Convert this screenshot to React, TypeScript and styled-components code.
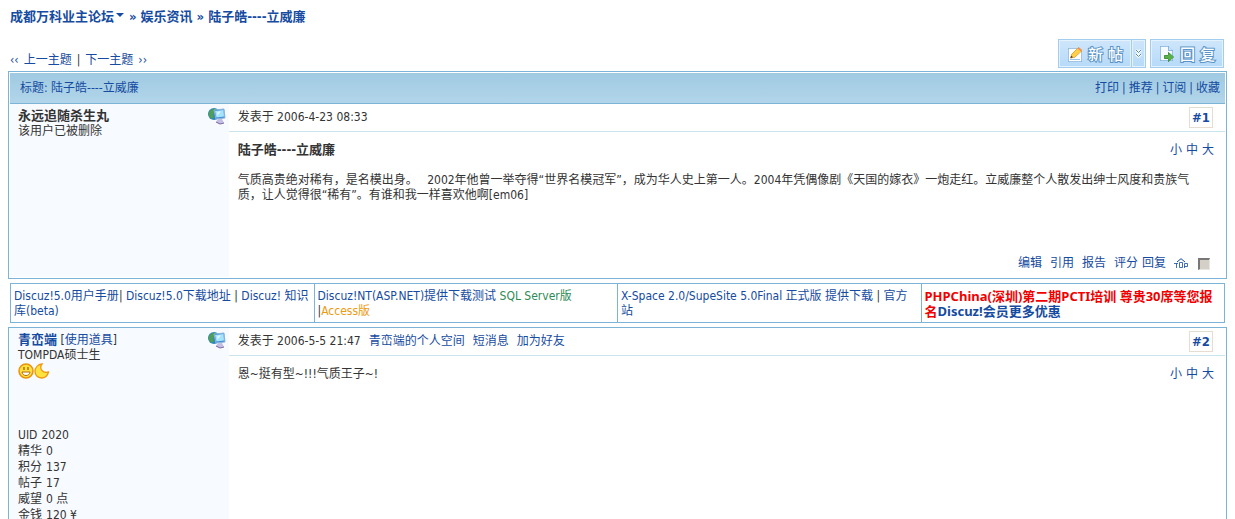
import React from "react";
import styled, { createGlobalStyle, css } from "styled-components";

const navy = "#154ba0";
const line = "#7cb4d8";

const Global = createGlobalStyle`
  * { box-sizing: border-box; }
  body {
    margin: 0;
    padding: 8px;
    background: #fff;
    color: #333;
    font: 12px/15px "DejaVu Sans Condensed", "Noto Sans CJK SC", sans-serif;
  }
  a { color: ${navy}; text-decoration: none; }
  a:hover { text-decoration: underline; }
  p, h1, h2, ul, dl, dd { margin: 0; padding: 0; }
`;

const Crumbs = styled.nav`
  display: flex;
  align-items: center;
  gap: 4px;
  padding: 1px 2px;
  font-size: 13px;
  line-height: 16px;
  font-weight: bold;
  color: ${navy};
`;

const Caret = styled.span`
  display: inline-block;
  margin: 0 1px 4px 2px;
  border: 4px solid transparent;
  border-top-color: ${navy};
  border-bottom-width: 0;
`;

const Toolbar = styled.div`
  display: flex;
  justify-content: space-between;
  align-items: flex-end;
  margin-top: 13px;
  padding: 0 3px 3px 2px;
`;

const Pager = styled.div`
  display: flex;
  gap: 5px;
  a {
    display: flex;
    gap: 5px;
  }
`;

const Actions = styled.div`
  display: flex;
  gap: 4px;
`;

const ButtonGroup = styled.div`
  display: flex;
`;

const ToolButton = styled.button<{ $narrow?: boolean }>`
  display: flex;
  align-items: center;
  justify-content: center;
  gap: 5px;
  width: ${(p) => (p.$narrow ? 14 : 74)}px;
  height: 29px;
  padding: 0;
  border: 1px solid #a3cdee;
  border-left-width: ${(p) => (p.$narrow ? 0 : 1)}px;
  box-shadow: inset 0 0 0 1px #e3f2fe;
  background: linear-gradient(#cfe6fb, #b5daf8);
  color: #fff;
  font: 500 15px/20px "Noto Sans CJK SC", sans-serif;
  -webkit-text-stroke: 2px #5a93c8;
  paint-order: stroke fill;
  cursor: pointer;
`;

const Panel = styled.section<{ $flush?: boolean }>`
  padding: ${(p) => (p.$flush ? 0 : 1)}px 1px 1px;
  border: 1px solid ${line};
`;

const PanelHead = styled.header`
  display: flex;
  justify-content: space-between;
  align-items: center;
  height: 31px;
  padding: 0 5px 0 10px;
  border-bottom: 1px solid ${line};
  background: linear-gradient(#9fcae2, #b2d5ea);
  color: ${navy};
`;

const Title = styled.h1`
  font-size: 12px;
  font-weight: normal;
`;

const HeadLinks = styled.div`
  display: flex;
  gap: 3px;
`;

const Post = styled.article<{ $tall?: boolean }>`
  display: grid;
  grid-template-columns: 18% 1fr;
  min-height: ${(p) => (p.$tall ? 280 : 173)}px;
`;

const Author = styled.aside`
  padding: 4px 3px 0 8px;
  background: #f7faff;
`;

const AuthorHead = styled.div`
  display: flex;
  justify-content: space-between;
  align-items: flex-start;
  height: 16px;
`;

const Name = styled.strong`
  font-size: 13px;
`;

const Moods = styled.div`
  display: flex;
  height: 64px;
`;

const Stats = styled.dl`
  line-height: 16px;
  div { display: flex; gap: 4px; }
`;

const Content = styled.div`
  display: flex;
  flex-direction: column;
`;

const PostBar = styled.div`
  display: flex;
  align-items: center;
  height: 28px;
  padding: 0 12px 0 9px;
  border-bottom: 1px solid #cbe5f0;
  gap: 8px;
`;

const Floor = styled.a`
  margin-left: auto;
  padding: 2px;
  border: 1px solid #e6ddd0;
  font-size: 13px;
  font-weight: bold;
`;

const Body = styled.div`
  flex: 1;
  padding: 10px 11px 0 9px;
`;

const BodyTop = styled.div`
  display: flex;
  justify-content: space-between;
  line-height: 16px;
`;

const Subject = styled.h2`
  font-size: 13px;
  line-height: 16px;
`;

const Sizes = styled.div`
  display: flex;
  gap: 4px;
`;

const Text = styled.p<{ $spaced?: boolean }>`
  ${(p) => p.$spaced && css`
    margin-top: 15px;
    padding-right: 20px;
  `}
`;

const PostFoot = styled.footer`
  display: flex;
  justify-content: flex-end;
  align-items: center;
  gap: 8px;
  padding: 0 15px 6px 0;
`;

const FootPair = styled.span`
  display: flex;
  gap: 4px;
`;

const TopLink = styled.a`
  display: flex;
`;

const Tick = styled.input`
  appearance: none;
  width: 12px;
  height: 12px;
  margin: 0 0 0 2px;
  border: 2px solid #777;
  border-right: 1px solid #e8e6e0;
  border-bottom: 1px solid #e8e6e0;
  background: #d4d0c8;
`;

const Ads = styled.table`
  width: calc(100% - 4px);
  margin: 4px 2px;
  border-collapse: collapse;
  table-layout: fixed;
  td {
    height: 39px;
    padding: 5px 4px 2px 3px;
    border: 1px solid ${line};
    vertical-align: top;
  }
`;

const Tint = styled.a<{ $c: string }>`
  color: ${(p) => p.$c};
`;

const Loud = styled.strong`
  display: block;
  font-family: "Noto Sans", "Noto Sans CJK SC", sans-serif;
  font-size: 13px;
  line-height: 15px;
`;

const Messenger = () => (
  <svg width="18" height="17" viewBox="0 0 18 17" aria-hidden="true">
    <circle cx="6" cy="6" r="6" fill="#2d86c0" />
    <path d="M1 4C3 1 6 0 8 1L7 4 5 6 6 9 4 11C1 9 0 7 1 4Z" fill="#4f9f56" />
    <path d="M6 2 16 1 17 10 8 11Z" fill="#3f8fd4" stroke="#8fb4dc" />
    <path d="M7 3 15.500 2 16 8.500 8.500 9.500Z" fill="#a6e2fb" />
    <path d="M9 4 13 3 9.500 8Z" fill="#d8f6ff" />
    <path d="M10 11H14L16 15 11 16 8 14Z" fill="#c4bfe2" />
    <path d="M8 14 12 16 16 15" fill="none" stroke="#7a68a8" />
  </svg>
);

const Smile = () => (
  <svg width="16" height="16" viewBox="0 0 16 16" aria-hidden="true">
    <circle cx="8" cy="8" r="7" fill="#ffe03c" stroke="#e8930c" strokeWidth="1.500" />
    <path d="M4 9H12C11.500 11.500 10 12.500 8 12.500S4.500 11.500 4 9Z" fill="#fff" stroke="#b06a14" />
    <path d="M6 4V7M10 4V7" stroke="#a05a10" strokeWidth="1.200" />
  </svg>
);

const Moon = () => (
  <svg width="16" height="16" viewBox="0 0 16 16" aria-hidden="true">
    <path d="M8 1C5 5 8 10.500 14.500 9C13.500 13 10.500 15 7.500 15C3.500 15 1 12 1 8.500C1 4.500 4 1.500 8 1Z" fill="#ffe23e" stroke="#ee9a10" strokeWidth="1.300" />
  </svg>
);

const Compose = () => (
  <svg width="16" height="16" viewBox="0 0 16 16" aria-hidden="true">
    <path d="M1.500 2.500H11L14.500 5V15.500H1.500Z" fill="#fff" stroke="#4488c8" />
    <path d="M3 13.500H13" stroke="#9ac4e8" />
    <path d="M3.500 12 5 8 11.500 1.500 15 4.500 8 11Z" fill="#ffcf4a" stroke="#c98328" />
    <path d="M10.500 2.500 11.500 1.500 15 4.500 14 5.500Z" fill="#f28a5c" />
    <path d="M3.500 12 4.300 9.800 6 11.300Z" fill="#333" />
  </svg>
);

const ReplyIcon = () => (
  <svg width="16" height="16" viewBox="0 0 16 16" aria-hidden="true">
    <path d="M1.500 .5H9.500L13.500 4.500V14.500H1.500Z" fill="#f4faff" stroke="#4488c8" />
    <path d="M9.500 .5V4.500H13.500" fill="#cfe6fa" stroke="#4488c8" />
    <path d="M5.500 9.500H9.500V6.500L14.500 11 9.500 15.500V12.500H5.500Z" fill="#58b04a" stroke="#2f7d2c" />
  </svg>
);

const Chevrons = () => (
  <svg width="7" height="9" viewBox="0 0 7 9" aria-hidden="true">
    <path d="M1 1 3.500 3.500 6 1M1 5 3.500 7.500 6 5" fill="none" stroke="#fff" strokeWidth="2.600" />
    <path d="M1 1 3.500 3.500 6 1M1 5 3.500 7.500 6 5" fill="none" stroke="#4d88c0" />
  </svg>
);

const TopIcon = () => (
  <svg width="14" height="11" viewBox="0 0 14 11" role="img" aria-label="TOP">
    <path d="M3 4 7 .7 11 4" fill="none" stroke={navy} />
    <path d="M0 5.500H4M2.500 5.500V10M5.500 4.500H8.500V9.500H5.500ZM10.500 10V5.500H13.500V8.500H10.500" fill="none" stroke={navy} strokeWidth=".8" />
  </svg>
);

const SizeLinks = () => (
  <Sizes>
    <a href="#s">小</a>
    <a href="#m">中</a>
    <a href="#l">大</a>
  </Sizes>
);

const stats = [
  ["UID", "2020"],
  ["精华", "0"],
  ["积分", "137"],
  ["帖子", "17"],
  ["威望", "0 点"],
  ["金钱", "120 ¥"],
];

export default function App() {
  return (
    <>
      <Global />
      <Crumbs>
        <a href="#forum">成都万科业主论坛<Caret /></a>
        <span>»</span>
        <a href="#board">娱乐资讯</a>
        <span>»</span>
        <span>陆子皓----立威廉</span>
      </Crumbs>
      <Toolbar>
        <Pager>
          <a href="#prev"><span>‹‹</span><span>上一主题</span></a>
          <span>|</span>
          <a href="#next"><span>下一主题</span><span>››</span></a>
        </Pager>
        <Actions>
          <ButtonGroup>
            <ToolButton><Compose /><span>新</span><span>帖</span></ToolButton>
            <ToolButton $narrow aria-label="更多"><Chevrons /></ToolButton>
          </ButtonGroup>
          <ToolButton><ReplyIcon /><span>回</span><span>复</span></ToolButton>
        </Actions>
      </Toolbar>

      <Panel>
        <PanelHead>
          <Title>标题: 陆子皓----立威廉</Title>
          <HeadLinks>
            <a href="#print">打印</a>|<a href="#recommend">推荐</a>|<a href="#subscribe">订阅</a>|<a href="#fav">收藏</a>
          </HeadLinks>
        </PanelHead>
        <Post>
          <Author>
            <AuthorHead>
              <Name>永远追随杀生丸</Name>
              <Messenger />
            </AuthorHead>
            <p>该用户已被删除</p>
          </Author>
          <Content>
            <PostBar>
              <span>发表于 2006-4-23 08:33</span>
              <Floor href="#1">#1</Floor>
            </PostBar>
            <Body>
              <BodyTop>
                <Subject>陆子皓----立威廉</Subject>
                <SizeLinks />
              </BodyTop>
              <Text $spaced>
                气质高贵绝对稀有，是名模出身。　{"\u00a0"}2002年他曾一举夺得“世界名模冠军”，成为华人史上第一人。2004年凭偶像剧《天国的嫁衣》一炮走红。立威廉整个人散发出绅士风度和贵族气质，让人觉得很“稀有”。有谁和我一样喜欢他啊[em06]
              </Text>
            </Body>
            <PostFoot>
              <a href="#edit">编辑</a>
              <a href="#quote">引用</a>
              <a href="#report">报告</a>
              <FootPair>
                <a href="#rate">评分</a>
                <a href="#reply">回复</a>
              </FootPair>
              <TopLink href="#top"><TopIcon /></TopLink>
              <Tick type="checkbox" aria-label="选择" />
            </PostFoot>
          </Content>
        </Post>
      </Panel>

      <Ads>
        <tbody>
          <tr>
            <td><a href="#a1">Discuz!5.0用户手册</a>| <a href="#a2">Discuz!5.0下载地址</a> | <a href="#a3">Discuz! 知识库(beta)</a></td>
            <td><a href="#a4">Discuz!NT(ASP.NET)提供下载测试</a> <Tint href="#a5" $c="#2e8b57">SQL Server版</Tint> |<Tint href="#a6" $c="#ee9a10">Access版</Tint></td>
            <td><a href="#a7">X-Space 2.0/SupeSite 5.0Final 正式版 提供下载</a> | <a href="#a8">官方站</a></td>
            <td><Loud><Tint href="#a9" $c="#f00000">PHPChina(深圳)第二期PCTI培训 尊贵30席等您报名</Tint><a href="#a10">Discuz!会员更多优惠</a></Loud></td>
          </tr>
        </tbody>
      </Ads>

      <Panel $flush>
        <Post $tall>
          <Author>
            <AuthorHead>
              <span><Name><a href="#user">青峦端</a></Name> [<a href="#tools">使用道具</a>]</span>
              <Messenger />
            </AuthorHead>
            <p>TOMPDA硕士生</p>
            <Moods><Smile /><Moon /></Moods>
            <Stats>
              {stats.map(([k, v]) => (
                <div key={k}><dt>{k}</dt><dd>{v}</dd></div>
              ))}
            </Stats>
          </Author>
          <Content>
            <PostBar>
              <span>发表于 2006-5-5 21:47</span>
              <a href="#space">青峦端的个人空间</a>
              <a href="#pm">短消息</a>
              <a href="#friend">加为好友</a>
              <Floor href="#2">#2</Floor>
            </PostBar>
            <Body>
              <BodyTop>
                <Text>恩~挺有型~!!!气质王子~!</Text>
                <SizeLinks />
              </BodyTop>
            </Body>
          </Content>
        </Post>
      </Panel>
    </>
  );
}
